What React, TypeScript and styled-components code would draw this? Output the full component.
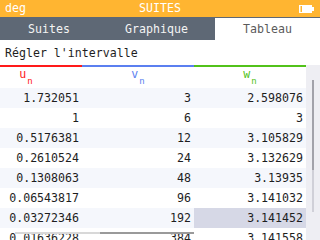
import React from "react";
import styled, { createGlobalStyle } from "styled-components";

const GlobalStyle = createGlobalStyle`
  html, body {
    margin: 0;
    padding: 0;
    background: #ffffff;
  }
  body {
    font-family: "DejaVu Sans Mono", "Liberation Mono", monospace;
  }
`;

const Screen = styled.div`
  width: 320px;
  height: 240px;
  overflow: hidden;
  display: flex;
  flex-direction: column;
  font-size: 11.6px;
  color: #1e1e1e;
`;

const TitleBar = styled.div`
  height: 17px;
  background: #ffb531;
  color: #ffffff;
  display: grid;
  grid-template-columns: 1fr auto 1fr;
  align-items: center;
  padding: 0 5px;
`;

const TitleText = styled.span`
  line-height: 17px;
`;

const Battery = styled.div`
  justify-self: end;
  display: flex;
  align-items: center;
`;

const TabBar = styled.div`
  height: 22px;
  border-top: 1px solid #5e6875;
  background: #5e6875;
  display: grid;
  grid-template-columns: 98px 117px 1fr;
`;

const Tab = styled.div<{ $active?: boolean }>`
  display: flex;
  align-items: center;
  justify-content: center;
  background: ${(p) => (p.$active ? "#ffffff" : "transparent")};
  color: ${(p) => (p.$active ? "#5a5a5a" : "#f4f4f4")};
`;

const Prompt = styled.div`
  height: 25px;
  display: flex;
  align-items: center;
  padding-left: 5px;
  padding-top: 1px;
  box-sizing: border-box;
`;

const TableArea = styled.div`
  flex: 1;
  display: flex;
  min-height: 0;
`;

const Viewport = styled.div`
  width: 306px;
  overflow: hidden;
  position: relative;
`;

const Grid = styled.div`
  margin-left: -30px;
  display: grid;
  grid-template-columns: 112px 112px 112px;
`;

const HeadCell = styled.div<{ $color: string }>`
  height: 19px;
  border-top: 2px solid ${(p) => p.$color};
  color: ${(p) => p.$color};
  display: flex;
  align-items: flex-start;
  justify-content: center;
  padding-top: 2px;
  box-sizing: content-box;
  padding-left: ${(p) => (p.$color === "#ff1a1a" ? "0" : "0")};
`;

const Label = styled.span`
  line-height: 11px;
  position: relative;
`;

const Sub = styled.span`
  font-size: 9px;
  position: relative;
  top: 8px;
  margin-left: 1px;
  line-height: 9px;
`;

const Cell = styled.div<{ $shade: boolean; $selected?: boolean }>`
  height: 20px;
  display: flex;
  align-items: center;
  justify-content: flex-end;
  padding-right: 3px;
  background: ${(p) =>
    p.$selected ? "#d6d8e6" : p.$shade ? "#f5f7fc" : "#ffffff"};
`;

const HScroll = styled.div`
  position: absolute;
  left: 15px;
  bottom: 6px;
  height: 2px;
  width: 179px;
  display: flex;
`;

const HTrack = styled.div`
  width: 85px;
  background: #d8d8d8;
`;

const HThumb = styled.div`
  flex: 1;
  background: #9a9a9a;
`;

const ScrollColumn = styled.div`
  flex: 1;
  background: #eeeef3;
  display: flex;
  justify-content: center;
  padding-top: 15px;
`;

const VTrack = styled.div`
  width: 2px;
  height: 132px;
  background: #d0d0d8;
  display: flex;
  flex-direction: column;
`;

const VThumb = styled.div`
  height: 90px;
  background: #a2a2aa;
`;

const columns = [
  { name: "u", color: "#ff1a1a" },
  { name: "v", color: "#5b7ff0" },
  { name: "w", color: "#52c21a" },
];

const rows: string[][] = [
  ["1.732051", "3", "2.598076"],
  ["1", "6", "3"],
  ["0.5176381", "12", "3.105829"],
  ["0.2610524", "24", "3.132629"],
  ["0.1308063", "48", "3.13935"],
  ["0.06543817", "96", "3.141032"],
  ["0.03272346", "192", "3.141452"],
  ["0.01636228", "384", "3.141558"],
];

function BatteryIcon() {
  return (
    <svg width="16" height="8" viewBox="0 0 16 8">
      <rect x="0" y="0" width="1.5" height="8" fill="#ffffff" />
      <rect x="3" y="0" width="10" height="8" fill="#ffffff" />
      <rect x="0" y="0" width="13" height="1" fill="#ffffff" />
      <rect x="0" y="7" width="13" height="1" fill="#ffffff" />
      <rect x="13" y="2" width="2" height="4" fill="#ffffff" />
    </svg>
  );
}

export default function App() {
  return (
    <>
      <GlobalStyle />
      <Screen>
        <TitleBar>
          <TitleText>deg</TitleText>
          <TitleText>SUITES</TitleText>
          <Battery>
            <BatteryIcon />
          </Battery>
        </TitleBar>
        <TabBar>
          <Tab>Suites</Tab>
          <Tab>Graphique</Tab>
          <Tab $active>Tableau</Tab>
        </TabBar>
        <Prompt>Régler l'intervalle</Prompt>
        <TableArea>
          <Viewport>
            <Grid>
              {columns.map((c) => (
                <HeadCell key={c.name} $color={c.color}>
                  <Label>{c.name}</Label>
                  <Sub>n</Sub>
                </HeadCell>
              ))}
              {rows.map((r, i) =>
                r.map((v, j) => (
                  <Cell
                    key={`${i}-${j}`}
                    $shade={i % 2 === 0}
                    $selected={i === 6 && j === 2}
                  >
                    {v}
                  </Cell>
                ))
              )}
            </Grid>
            <HScroll>
              <HTrack />
              <HThumb />
            </HScroll>
          </Viewport>
          <ScrollColumn>
            <VTrack>
              <VThumb />
            </VTrack>
          </ScrollColumn>
        </TableArea>
      </Screen>
    </>
  );
}
